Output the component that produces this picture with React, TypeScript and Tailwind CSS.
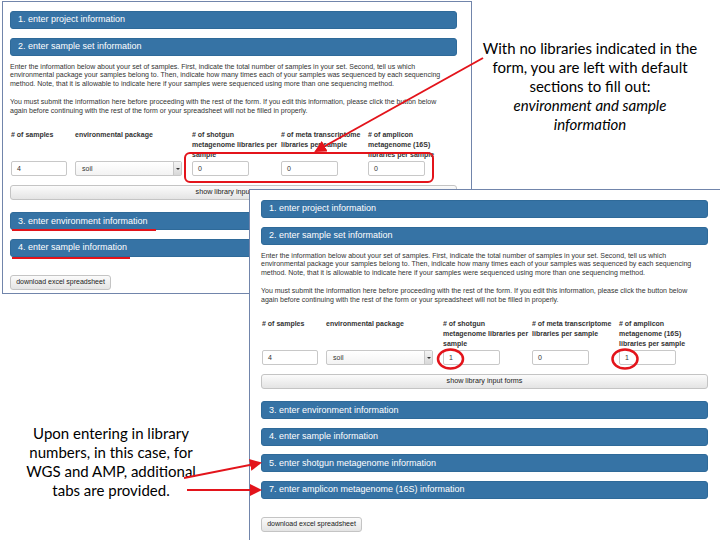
import React from "react";

const UI_FONT = "font-['Liberation_Sans','Helvetica',sans-serif]";

function Panel({ title }: { title: string }) {
  return (
    <div className="flex h-[18px] items-center rounded-[3px] border border-[#2f6a99] bg-[#3673a5] pl-[7px] text-[9px] text-white">
      {title}
    </div>
  );
}

function GrayButton({ label, className }: { label: string; className?: string }) {
  return (
    <div
      className={`flex h-[15px] items-center justify-center rounded-[3px] border border-[#c4c4c4] bg-gradient-to-b from-[#fbfbfb] to-[#e4e4e4] text-[#222] ${className ?? ""}`}
    >
      {label}
    </div>
  );
}

function NumInput({ value, width }: { value: string; width: string }) {
  return (
    <div className={`flex h-[15px] items-center rounded-[2px] border border-[#c8c8c8] bg-white pl-[5px] text-[7px] text-[#333] ${width}`}>
      {value}
    </div>
  );
}

interface FormProps {
  shotgun: string;
  meta: string;
  amplicon: string;
  extraPanels: string[];
}

function FormBody({ shotgun, meta, amplicon, extraPanels }: FormProps) {
  return (
    <div className={`flex w-[447px] flex-col ${UI_FONT}`}>
      <Panel title="1. enter project information" />
      <div className="mt-[8.5px]">
        <Panel title="2. enter sample set information" />
      </div>

      <div className="mt-[7.5px] whitespace-nowrap text-[7px] leading-[8.3px] text-[#333]">
        <p className="mb-[10.5px]">
          Enter the information below about your set of samples. First, indicate the total number of samples in your set. Second, tell us which
          <br />
          environmental package your samples belong to. Then, indicate how many times each of your samples was sequenced by each sequencing
          <br />
          method. Note, that it is allowable to indicate here if your samples were sequenced using more than one sequencing method.
        </p>
        <p>
          You must submit the information here before proceeding with the rest of the form. If you edit this information, please click the button below
          <br />
          again before continuing with the rest of the form or your spreadsheet will not be filled in properly.
        </p>
      </div>

      <div className="mt-[15px] grid grid-cols-[65px_117px_89px_87px_1fr] gap-y-[2px] whitespace-nowrap text-[7px] leading-[9.8px] font-bold text-[#333]">
        <div className="pl-[1px]"># of samples</div>
        <div>environmental package</div>
        <div>
          # of shotgun
          <br />
          metagenome libraries per
          <br />
          sample
        </div>
        <div>
          # of meta transcriptome
          <br />
          libraries per sample
        </div>
        <div>
          # of amplicon
          <br />
          metagenome (16S)
          <br />
          libraries per sample
        </div>

        <div className="self-end pl-[1px] font-normal">
          <NumInput value="4" width="w-[56px]" />
        </div>
        <div className="self-end font-normal">
          <div className="flex h-[15px] w-[107px] items-center rounded-[2px] border border-[#c8c8c8] bg-gradient-to-b from-white to-[#f3f3f3] text-[7px] text-[#333]">
            <span className="flex-1 pl-[6px]">soil</span>
            <span className="flex h-full w-[8px] items-center justify-center border-l border-[#c8c8c8] bg-gradient-to-b from-[#f4f4f4] to-[#d8d8d8]">
              <span className="h-0 w-0 border-x-[2px] border-t-[2.5px] border-x-transparent border-t-[#333]" />
            </span>
          </div>
        </div>
        <div className="self-end font-normal">
          <NumInput value={shotgun} width="w-[57px]" />
        </div>
        <div className="self-end font-normal">
          <NumInput value={meta} width="w-[57px]" />
        </div>
        <div className="self-end font-normal">
          <NumInput value={amplicon} width="w-[57px]" />
        </div>
      </div>

      <GrayButton label="show library input forms" className="mt-[9px] w-full text-[7.2px]" />

      <div className="mt-[12px] flex flex-col gap-[8.5px]">
        <Panel title="3. enter environment information" />
        <Panel title="4. enter sample information" />
        {extraPanels.map((t) => (
          <Panel key={t} title={t} />
        ))}
      </div>

      <GrayButton label="download excel spreadsheet" className="mt-[18px] w-[101px] text-[7px]" />
    </div>
  );
}

export default function App() {
  return (
    <div className="relative h-[540px] w-[720px] overflow-hidden bg-white">
      {/* first screenshot: nothing entered */}
      <div className="absolute left-[2px] top-[1px] h-[293px] w-[470px] border border-[#7185ab] bg-white pl-[7px] pt-[9px]">
        <FormBody shotgun="0" meta="0" amplicon="0" extraPanels={[]} />
      </div>

      {/* second screenshot: libraries entered */}
      <div className="absolute left-[249px] top-[189px] h-[360px] w-[480px] border border-[#7185ab] bg-white pl-[11px] pt-[10px]">
        <FormBody
          shotgun="1"
          meta="0"
          amplicon="1"
          extraPanels={["5. enter shotgun metagenome information", "7. enter amplicon metagenome (16S) information"]}
        />
      </div>

      {/* callouts */}
      <div className="absolute left-[470px] top-[39px] w-[240px] text-center font-['Lato','Open_Sans',sans-serif] text-[15px] leading-[19px] text-black">
        With no libraries indicated in the
        <br />
        form, you are left with default
        <br />
        sections to fill out:
        <br />
        <i>environment and sample</i>
        <br />
        <i>information</i>
      </div>

      <div className="absolute left-[-9px] top-[424px] w-[240px] text-center font-['Lato','Open_Sans',sans-serif] text-[15px] leading-[19px] text-black">
        Upon entering in library
        <br />
        numbers, in this case, for
        <br />
        WGS and AMP, additional
        <br />
        tabs are provided.
      </div>

      <svg className="pointer-events-none absolute left-0 top-0" width="720" height="540" viewBox="0 0 720 540">
        <defs>
          <marker id="head" markerWidth="6" markerHeight="6" refX="5" refY="3" orient="auto" markerUnits="strokeWidth">
            <path d="M0,0 L6,3 L0,6 Z" fill="#e3141b" />
          </marker>
        </defs>
        <rect x="185" y="153" width="248" height="29" rx="5" fill="none" stroke="#e3141b" strokeWidth="2" />
        <line x1="12" y1="230" x2="156" y2="230" stroke="#e3141b" strokeWidth="2" />
        <line x1="12" y1="258" x2="130" y2="258" stroke="#e3141b" strokeWidth="2" />
        <line x1="483" y1="58" x2="316" y2="151" stroke="#e3141b" strokeWidth="2" markerEnd="url(#head)" />
        <ellipse cx="450.5" cy="359" rx="12.5" ry="9.5" fill="none" stroke="#e3141b" strokeWidth="2.5" />
        <ellipse cx="625" cy="359" rx="12.5" ry="9.5" fill="none" stroke="#e3141b" strokeWidth="2.5" />
        <line x1="184" y1="478" x2="260" y2="463" stroke="#e3141b" strokeWidth="2" markerEnd="url(#head)" />
        <line x1="187" y1="490" x2="260" y2="490" stroke="#e3141b" strokeWidth="2" markerEnd="url(#head)" />
      </svg>
    </div>
  );
}
